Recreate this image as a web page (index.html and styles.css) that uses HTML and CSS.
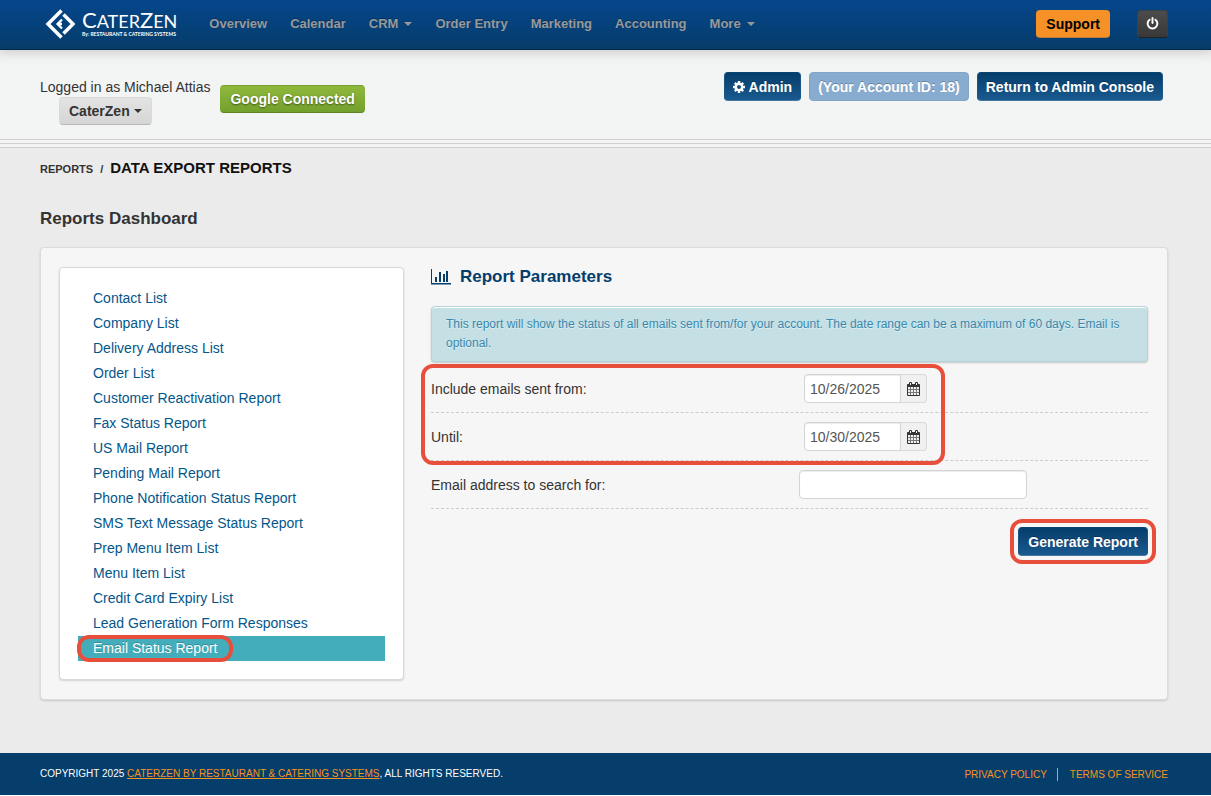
FILE: index.html
```html
<!DOCTYPE html>
<html lang="en">
<head>
    <meta charset="UTF-8">
    <meta name="viewport" content="width=device-width, initial-scale=1.0">
    <title>CaterZen - Data Export Reports</title>
    <link rel="stylesheet" href="styles.css">
</head>
<body>

    <header class="navbar">
        <a class="brand" href="#" aria-label="CaterZen home">
            <svg class="brand-mark" viewBox="0 0 30 30" width="30" height="30" fill="none" stroke="#fff">
                <path d="M16.500 1.500 3 15l13.500 13.500" stroke-width="3.500"/>
                <path d="M18.500 5.500 28 15l-9.500 9.500" stroke-width="3.500"/>
                <path d="M17 10.500 12.500 15l4.500 4.500" stroke-width="2.200"/>
                <path d="M14 15h3" stroke-width="2.500"/>
            </svg>
            <span class="brand-text">
                <span class="brand-name"><b>C</b>ATER<b>Z</b>EN</span>
                <span class="brand-sub">By: RESTAURANT &amp; CATERING SYSTEMS</span>
            </span>
        </a>
        <nav class="main-nav">
            <a href="#">Overview</a>
            <a href="#">Calendar</a>
            <a href="#">CRM <span class="caret"></span></a>
            <a href="#">Order Entry</a>
            <a href="#">Marketing</a>
            <a href="#">Accounting</a>
            <a href="#">More <span class="caret"></span></a>
        </nav>
        <div class="nav-actions">
            <a class="btn btn-warning" href="#">Support</a>
            <button class="btn btn-inverse" type="button" aria-label="Log out">
                <svg viewBox="0 0 12 12" width="13" height="13" fill="none" stroke="#fff" stroke-width="1.800" stroke-linecap="round">
                    <path d="M6 1v4.500M3.300 2.500a4.500 4.500 0 1 0 5.400 0"/>
                </svg>
            </button>
        </div>
    </header>

    <section class="subhead">
        <div class="user">
            <span>Logged in as Michael Attias</span>
            <button class="btn btn-default" type="button">CaterZen <span class="caret"></span></button>
        </div>
        <a class="btn btn-success" href="#">Google Connected</a>
        <div class="admin-actions">
            <a class="btn btn-primary" href="#">
                <svg viewBox="0 0 12 12" width="12" height="12">
                    <circle cx="6" cy="6" r="3.200" fill="none" stroke="#fff" stroke-width="2.400"/>
                    <path d="M6 0v2.500M6 9.500V12M0 6h2.500M9.500 6H12M1.800 1.800l1.700 1.700M8.500 8.500l1.700 1.700M1.800 10.200l1.700-1.700M8.500 3.500l1.700-1.700" stroke="#fff" stroke-width="2.400"/>
                </svg>
                Admin
            </a>
            <button class="btn btn-primary" type="button" disabled>(Your Account ID: 18)</button>
            <a class="btn btn-primary" href="#">Return to Admin Console</a>
        </div>
    </section>

    <main class="content">
        <div class="breadcrumb">
            <a href="#">REPORTS</a>
            <span>/</span>
            <strong>DATA EXPORT REPORTS</strong>
        </div>
        <h1>Reports Dashboard</h1>

        <div class="well">
            <ul class="report-list">
                <li><a href="#">Contact List</a></li>
                <li><a href="#">Company List</a></li>
                <li><a href="#">Delivery Address List</a></li>
                <li><a href="#">Order List</a></li>
                <li><a href="#">Customer Reactivation Report</a></li>
                <li><a href="#">Fax Status Report</a></li>
                <li><a href="#">US Mail Report</a></li>
                <li><a href="#">Pending Mail Report</a></li>
                <li><a href="#">Phone Notification Status Report</a></li>
                <li><a href="#">SMS Text Message Status Report</a></li>
                <li><a href="#">Prep Menu Item List</a></li>
                <li><a href="#">Menu Item List</a></li>
                <li><a href="#">Credit Card Expiry List</a></li>
                <li><a href="#">Lead Generation Form Responses</a></li>
                <li class="active"><a href="#">Email Status Report</a></li>
            </ul>

            <form class="params">
                <h2>
                    <svg viewBox="0 0 20 16" width="20" height="16" fill="#053d6b">
                        <path d="M0 0h1v14h19v1.500H0zM4 8h2v5H4zM8 3h2v10H8zM12 5h2v8h-2zM15 2h2v11h-2z"/>
                    </svg>
                    Report Parameters
                </h2>
                <p class="alert">This report will show the status of all emails sent from/for your account. The date range can be a maximum of 60 days. Email is optional.</p>

                <div class="date-range">
                    <div class="row">
                        <label for="from">Include emails sent from:</label>
                        <div class="field date-field">
                            <input type="text" id="from" value="10/26/2025">
                            <button type="button" aria-label="Pick start date">
                                <svg viewBox="0 0 13 14" width="13" height="14" fill="none" stroke="#333">
                                    <path d="M3.500 4.500v9M6.500 4.500v9M9.500 4.500v9M.5 7.500h12M.5 10.500h12" stroke="#777"/>
                                    <path d="M.5 4.500h12v9H.5z"/>
                                    <path d="M.5 2.500h12v2H.5z" fill="#333"/>
                                    <path d="M2.500.5h2v3h-2zM8.500.5h2v3h-2z" fill="#f0f0f0"/>
                                </svg>
                            </button>
                        </div>
                    </div>
                    <div class="row">
                        <label for="until">Until:</label>
                        <div class="field date-field">
                            <input type="text" id="until" value="10/30/2025">
                            <button type="button" aria-label="Pick end date">
                                <svg viewBox="0 0 13 14" width="13" height="14" fill="none" stroke="#333">
                                    <path d="M3.500 4.500v9M6.500 4.500v9M9.500 4.500v9M.5 7.500h12M.5 10.500h12" stroke="#777"/>
                                    <path d="M.5 4.500h12v9H.5z"/>
                                    <path d="M.5 2.500h12v2H.5z" fill="#333"/>
                                    <path d="M2.500.5h2v3h-2zM8.500.5h2v3h-2z" fill="#f0f0f0"/>
                                </svg>
                            </button>
                        </div>
                    </div>
                </div>
                <div class="row">
                    <label for="email">Email address to search for:</label>
                    <div class="field">
                        <input type="text" id="email">
                    </div>
                </div>
                <div class="form-actions">
                    <button class="btn btn-primary" type="button">Generate Report</button>
                </div>
            </form>
        </div>
    </main>

    <footer class="footer">
        <p>COPYRIGHT 2025 <a href="#">CATERZEN BY RESTAURANT &amp; CATERING SYSTEMS</a>, ALL RIGHTS RESERVED.</p>
        <nav class="footer-links">
            <a href="#">PRIVACY POLICY</a>
            <a href="#">TERMS OF SERVICE</a>
        </nav>
    </footer>

</body>
</html>
```
FILE: styles.css
```css
*,
*::before,
*::after {
    margin: 0;
    padding: 0;
    box-sizing: border-box;
}

body {
    font-family: "Liberation Sans", Arial, sans-serif;
    font-size: 14px;
    line-height: 20px;
    color: #333;
    background: #ebebeb;
    min-height: 100vh;
    display: flex;
    flex-direction: column;
    border-bottom: 1px solid #fff;
}

a {
    color: #04568a;
    text-decoration: none;
}

input,
button {
    font: inherit;
}

/* Buttons */
.btn {
    display: inline-flex;
    align-items: center;
    justify-content: center;
    gap: 4px;
    height: 28px;
    padding: 0 9px;
    border: 1px solid transparent;
    border-radius: 4px;
    font-weight: bold;
    white-space: nowrap;
}

.btn-primary {
    height: 29px;
    color: #fff;
    background: linear-gradient(#053d6b, #1a5a8f);
    border-color: #0a4372 #1c5483 #4377a0;
    text-shadow: 0 -1px 0 rgba(0, 0, 0, 0.25);
}

.btn-primary:disabled {
    background: #88acd0;
    border-color: #82a6ca;
}

.btn-success {
    color: #fff;
    background: linear-gradient(#8fb83c, #73a02d);
    border-bottom-color: #5e8424;
    text-shadow: 0 1px 2px rgba(0, 0, 0, 0.5);
}

.btn-warning {
    color: #000;
    background: #f69127;
    border-bottom-color: #c27b36;
}

.btn-inverse {
    background: linear-gradient(#4c4c4c, #383838);
    border-color: #404040 #404040 #222;
    padding: 0 8px;
}

.btn-default {
    color: #333;
    background: linear-gradient(#e3e3e3, #d6d6d6);
    border-color: #d9d9d9 #d9d9d9 #b8b8b8;
}

.caret {
    display: inline-block;
    border-top: 4px solid currentColor;
    border-left: 4px solid transparent;
    border-right: 4px solid transparent;
}

/* Top bar */
.navbar {
    position: relative;
    display: flex;
    align-items: center;
    height: 50px;
    padding: 0 43px 2px 45px;
    background: linear-gradient(#05468c, #053c69);
    border-bottom: 1px solid #052a49;
    box-shadow: 0 1px 10px rgba(0, 0, 0, 0.15);
}

.brand {
    display: flex;
    align-items: center;
    gap: 7px;
    color: #fff;
}

.brand-text {
    display: flex;
    flex-direction: column;
}

.brand-name {
    font-family: Lato, sans-serif;
    font-size: 18px;
    line-height: 20px;
}

.brand-name b {
    font-size: 22px;
    font-weight: normal;
}

.brand-sub {
    font-family: Lato, sans-serif;
    font-size: 5px;
    font-weight: bold;
    line-height: 6px;
    white-space: nowrap;
}

.main-nav {
    display: flex;
    gap: 23px;
    margin-left: 32px;
}

.main-nav a {
    display: flex;
    align-items: center;
    gap: 6px;
    color: #999;
    font-size: 13px;
    font-weight: bold;
    text-shadow: 0 -1px 0 rgba(0, 0, 0, 0.25);
}

.nav-actions {
    display: flex;
    gap: 27px;
    margin-left: auto;
}

/* Account strip */
.subhead {
    display: flex;
    align-items: flex-start;
    gap: 10px;
    height: 98px;
    padding: 0 48px 0 40px;
    background: linear-gradient(#eaebeb, #f3f4f4 16px, #f3f4f4 89px, #d0d0d0 89px, #d0d0d0 90px, #f3f3f3 90px, #f3f3f3 93px, #d0d0d0 93px, #d0d0d0 94px, #f3f3f3 94px, #f3f3f3 97px, #d0d0d0 97px);
}

.user {
    display: flex;
    flex-direction: column;
    padding-top: 27px;
}

.user .btn {
    align-self: flex-start;
    margin-left: 19px;
}

.subhead .btn-success {
    margin-top: 35px;
}

.admin-actions {
    display: flex;
    gap: 8px;
    margin: 22px 0 0 auto;
}

.admin-actions .btn {
    padding: 0 8px;
}

/* Page content */
.content {
    flex: 1;
    padding: 10px 43px 0 40px;
}

.breadcrumb {
    display: flex;
    align-items: baseline;
    gap: 7px;
    font-size: 11px;
    font-weight: bold;
}

.breadcrumb a {
    color: #333;
}

.breadcrumb strong {
    font-size: 15px;
    color: #111;
}

h1 {
    margin: 30px 0 18px;
    font-size: 17px;
    line-height: 20px;
}

.well {
    display: flex;
    gap: 27px;
    padding: 19px 19px 19px 18px;
    background: #f6f6f6;
    border: 1px solid #dcdcdc;
    border-radius: 4px;
    box-shadow: 0 1px 2px rgba(0, 0, 0, 0.15);
}

.report-list {
    flex: 0 0 345px;
    padding: 18px;
    list-style: none;
    background: #fff;
    border: 1px solid #d8d8d8;
    border-radius: 4px;
    box-shadow: 0 1px 2px rgba(0, 0, 0, 0.15);
}

.report-list li {
    padding-left: 15px;
    line-height: 25px;
}

.report-list .active {
    position: relative;
    background: #43adbb;
}

.report-list .active a {
    color: #fff;
    text-shadow: 0 -1px 0 rgba(0, 0, 0, 0.2);
}

/* Red marker round the selected report */
.report-list .active::before {
    content: "";
    position: absolute;
    inset: -1px auto -1px -1px;
    width: 156px;
    border: 4px solid #e74f3c;
    border-radius: 12px;
}

/* Report form */
.params {
    flex: 1;
}

.params h2 {
    display: flex;
    align-items: center;
    gap: 9px;
    margin-bottom: 19px;
    font-size: 17px;
    line-height: 20px;
    color: #053d6b;
}

.alert {
    padding: 8px 20px 8px 14px;
    font-size: 12px;
    line-height: 19px;
    color: #3a87ad;
    background: #c4e0e4;
    border: 1px solid #b5d4d9;
    border-radius: 4px;
    box-shadow: inset 0 1px 0 #fff, 0 1px 2px rgba(0, 0, 0, 0.2);
    text-shadow: 0 1px 0 rgba(255, 255, 255, 0.5);
}

/* Red marker round the two dates */
.date-range {
    position: relative;
    padding-top: 3px;
}

.date-range::after {
    content: "";
    position: absolute;
    inset: 2px auto -4px -10px;
    width: 524px;
    border: 4px solid #e74f3c;
    border-radius: 12px;
    pointer-events: none;
}

.row {
    display: grid;
    grid-template-columns: 368px 1fr;
    align-items: center;
    height: 48px;
    border-bottom: 1px dashed #ccc;
}

.field input {
    width: 228px;
    height: 29px;
    padding: 0 5px;
    color: #555;
    background: #fff;
    border: 1px solid #d4d4d4;
    border-radius: 4px;
    box-shadow: inset 0 1px 1px rgba(0, 0, 0, 0.08);
}

.date-field {
    display: flex;
    padding-left: 5px;
}

.date-field input {
    width: 97px;
    border-radius: 4px 0 0 4px;
}

.date-field button {
    display: flex;
    align-items: center;
    justify-content: center;
    width: 26px;
    background: #f0f0f0;
    border: 1px solid #d9d9d9;
    border-left: 0;
    border-radius: 0 4px 4px 0;
}

.form-actions {
    display: flex;
    justify-content: flex-end;
    padding-top: 18px;
}

.form-actions .btn {
    outline: 4px solid #e74f3c;
    outline-offset: 4px;
}

/* Footer */
.footer {
    display: flex;
    align-items: center;
    justify-content: space-between;
    height: 42px;
    padding: 0 43px 0 40px;
    font-size: 10px;
    color: #fff;
    background: #053d6b;
}

.footer a {
    color: #f7941d;
}

.footer p a {
    text-decoration: underline;
}

.footer-links {
    display: flex;
    line-height: 13px;
}

.footer-links a + a {
    margin-left: 10px;
    padding-left: 12px;
    border-left: 1px solid #8fb0cc;
}
```
